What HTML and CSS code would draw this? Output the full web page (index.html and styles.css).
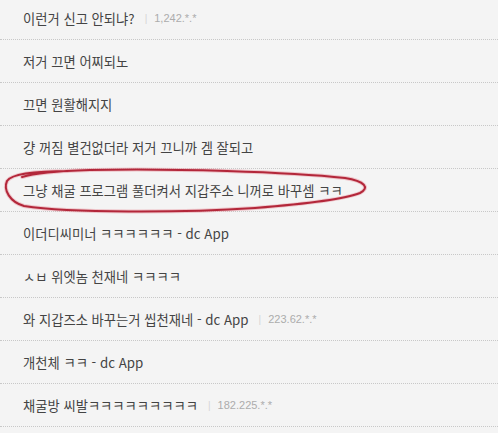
FILE: index.html
```html
<!DOCTYPE html>
<html lang="ko">
<head>
<meta charset="utf-8">
<title>댓글</title>
<link rel="stylesheet" href="styles.css">
</head>
<body>
<ul class="comments">
  <li class="row"><span class="txt">이런거 신고 안되냐?</span><span class="bar">|</span><span class="ip">1,242.*.*</span></li>
  <li class="row"><span class="txt">저거 끄면 어찌되노</span></li>
  <li class="row"><span class="txt">끄면 원활해지지</span></li>
  <li class="row"><span class="txt">걍 꺼짐 별건없더라 저거 끄니까 겜 잘되고</span></li>
  <li class="row"><span class="txt">그냥 채굴 프로그램 풀더켜서 지갑주소 니꺼로 바꾸셈 ㅋㅋ</span></li>
  <li class="row"><span class="txt">이더디씨미너 ㅋㅋㅋㅋㅋㅋ - dc App</span></li>
  <li class="row"><span class="txt">ㅅㅂ 위엣놈 천재네 ㅋㅋㅋㅋ</span></li>
  <li class="row"><span class="txt">와 지갑즈소 바꾸는거 씹천재네 - dc App</span><span class="bar">|</span><span class="ip">223.62.*.*</span></li>
  <li class="row"><span class="txt">개천체 ㅋㅋ - dc App</span></li>
  <li class="row"><span class="txt">채굴방 씨발ㅋㅋㅋㅋㅋㅋㅋㅋㅋ</span><span class="bar">|</span><span class="ip">182.225.*.*</span></li>
</ul>
<svg class="scribble" width="498" height="433" viewBox="0 0 498 433" xmlns="http://www.w3.org/2000/svg">
  <path class="halo" d="M70 171 C40 171 12 173 7 181 C3 190 10 202 24 206 C70 213 180 213 255 208 C305 204 345 199 360 193 C370 188 365 181 345 178 C290 172 170 168 90 170 C60 171 35 173 22 177"/>
  <path class="ink" d="M70 171 C40 171 12 173 7 181 C3 190 10 202 24 206 C70 213 180 213 255 208 C305 204 345 199 360 193 C370 188 365 181 345 178 C290 172 170 168 90 170 C60 171 35 173 22 177"/>
</svg>
</body>
</html>
```

FILE: styles.css
```css
html, body {
  margin: 0;
  padding: 0;
}

body {
  background: #f4f4f4;
  width: 498px;
  height: 433px;
  overflow: hidden;
  position: relative;
  font-family: "Noto Sans CJK KR", "Noto Sans", sans-serif;
}

.comments {
  list-style: none;
  margin: -3px 0 0 0;
  padding: 0;
}

.row {
  display: flex;
  align-items: center;
  height: 42px;
  padding-left: 23px;
  border-bottom: 1px dotted #c8c8c8;
}

.txt {
  font-size: 13.3px;
  color: #444444;
}

.bar {
  font-family: "Liberation Sans", sans-serif;
  font-size: 10px;
  color: #d4d4d4;
  margin: 0 7px 0 10px;
}

.ip {
  font-family: "Liberation Sans", sans-serif;
  font-size: 11px;
  color: #acacac;
}

.scribble {
  position: absolute;
  left: 0;
  top: 0;
  pointer-events: none;
}

.halo {
  fill: none;
  stroke: #eaa0aa;
  stroke-width: 4;
  stroke-opacity: 0.55;
  stroke-linecap: round;
}

.ink {
  fill: none;
  stroke: #b3273a;
  stroke-width: 2;
  stroke-linecap: round;
}
```
